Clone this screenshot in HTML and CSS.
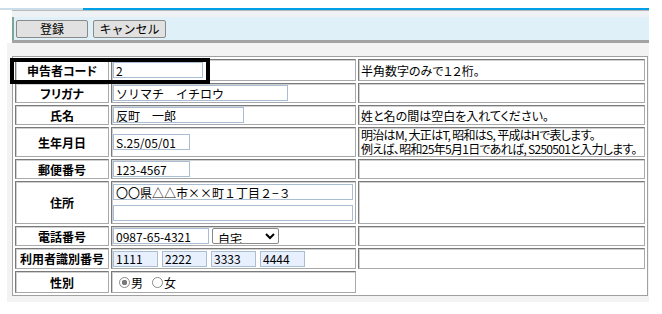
FILE: index.html
```html
<!DOCTYPE html>
<html lang="ja">
<head>
    <meta charset="UTF-8">
    <meta name="viewport" content="width=device-width, initial-scale=1.0">
    <title>申告者登録</title>
    <link rel="stylesheet" href="styles.css">
</head>
<body>
    <div class="header">
        <div class="accent-line"></div>
        <div class="toolbar">
            <div class="toolbar-band"></div>
            <div class="toolbar-body">
                <button type="button" class="tool-button btn-save">登録</button>
                <button type="button" class="tool-button btn-cancel">キャンセル</button>
            </div>
        </div>
    </div>

    <div class="panel">
        <div class="form-wrap">
            <table class="entry-table">
                <tr class="row-code">
                    <th>申告者コード</th>
                    <td class="field"><input type="text" class="text-input w-code" value="2"></td>
                    <td class="note">半角数字のみで１２桁。</td>
                </tr>
                <tr>
                    <th>フリガナ</th>
                    <td class="field"><input type="text" class="text-input w-kana" value="ソリマチ　イチロウ"></td>
                    <td class="note"></td>
                </tr>
                <tr>
                    <th>氏名</th>
                    <td class="field"><input type="text" class="text-input w-name" value="反町　一郎"></td>
                    <td class="note">姓と名の間は空白を入れてください。</td>
                </tr>
                <tr class="row-birth">
                    <th>生年月日</th>
                    <td class="field"><input type="text" class="text-input w-short" value="S.25/05/01"></td>
                    <td class="note note-tight">明治はM, 大正はT, 昭和はS, 平成はHで表します。<br>例えば、昭和25年5月1日であれば, S250501と入力します。</td>
                </tr>
                <tr>
                    <th>郵便番号</th>
                    <td class="field"><input type="text" class="text-input w-short" value="123-4567"></td>
                    <td class="note"></td>
                </tr>
                <tr class="row-address">
                    <th>住所</th>
                    <td class="field">
                        <input type="text" class="text-input w-address" value="〇〇県△△市××町１丁目２−３">
                        <input type="text" class="text-input w-address" value="">
                    </td>
                    <td class="note"></td>
                </tr>
                <tr>
                    <th>電話番号</th>
                    <td class="field">
                        <input type="text" class="text-input w-phone" value="0987-65-4321">
                        <select class="select-input">
                            <option selected>自宅</option>
                            <option>携帯</option>
                            <option>勤務先</option>
                        </select>
                    </td>
                    <td class="note"></td>
                </tr>
                <tr class="row-id">
                    <th>利用者識別番号</th>
                    <td class="field">
                        <input type="text" class="text-input id-input" value="1111">
                        <input type="text" class="text-input id-input" value="2222">
                        <input type="text" class="text-input id-input" value="3333">
                        <input type="text" class="text-input id-input" value="4444">
                    </td>
                    <td class="note"></td>
                </tr>
                <tr class="row-gender">
                    <th>性別</th>
                    <td class="field">
                        <label class="radio-label"><input type="radio" name="gender" class="radio" checked>男</label>
                        <label class="radio-label"><input type="radio" name="gender" class="radio">女</label>
                    </td>
                </tr>
            </table>
            <!-- 注目枠 -->
            <div class="highlight-box"></div>
        </div>
    </div>
</body>
</html>
```

FILE: styles.css
```css
:root {
    --accent-blue: #00a0e9;
    --toolbar-blue: #dff0f8;
    --panel-gray: #f3f3f3;
    --input-border: #a9bdd5;
    --id-background: #e8f0fe;
}

body {
    font-family: 'Noto Sans CJK JP', 'Noto Sans', sans-serif;
    font-feature-settings: "palt";
    font-size: 12px;
    color: #000;
    background-color: #fff;
    margin: 0;
    padding: 8px 0 0 0;
}

/* ヘッダー */
.accent-line {
    width: 649px;
    height: 2px;
    background: linear-gradient(to right, #cbdde8 83px, var(--accent-blue) 83px);
}

.toolbar {
    width: 637px;
    margin-left: 12px;
    border-top: 1px solid #b9b9b9;
    border-bottom: 3px solid #a3a3a3;
}

.toolbar-band {
    height: 6px;
    background-color: #eef2f4;
}

.toolbar-body {
    display: flex;
    gap: 5px;
    height: 23px;
    box-sizing: border-box;
    padding: 3px 0 0 2px;
    background-color: var(--toolbar-blue);
    border-left: 2px solid #7ea792;
}

.tool-button {
    height: 18px;
    padding: 0;
    font-family: inherit;
    font-size: 12px;
    line-height: 16px;
    color: #000;
    background-color: #e1e1e1;
    border: 1px solid #8a8a8a;
    border-radius: 2px;
    cursor: pointer;
}

.btn-save {
    width: 72px;
}

.btn-cancel {
    width: 73px;
}

/* 入力パネル */
.panel {
    width: 642px;
    margin-left: 7px;
    padding: 13px 0 6px 5px;
    box-sizing: border-box;
    background-color: var(--panel-gray);
}

.form-wrap {
    position: relative;
    width: 636px;
}

.entry-table {
    width: 636px;
    background-color: #fff;
    border: 1px solid #a0a0a0;
    border-spacing: 2px;
    table-layout: fixed;
}

.entry-table th,
.entry-table td {
    border: 1px solid #7f7f7f;
    border-color: #7a7a7a #a9a9a9 #a9a9a9 #7a7a7a;
    box-shadow: inset 1px 1px 0 #d0d0d0;
    height: 20px;
    box-sizing: border-box;
    padding: 0;
}

.entry-table th {
    width: 94px;
    font-weight: bold;
    text-align: center;
}

.entry-table td.field {
    width: 245px;
    padding: 1px 1px;
    white-space: nowrap;
    font-size: 0;
}

.entry-table td.note {
    padding: 0 2px;
    line-height: 13px;
    white-space: nowrap;
}

.entry-table td.note-tight {
    letter-spacing: -0.7px;
    line-height: 14px;
}

.row-code th,
.row-code td {
    height: 22px;
}

.row-birth th,
.row-birth td {
    height: 30px;
}

.row-address td.field {
    height: 43px;
    padding: 2px 1px;
}

.row-id th,
.row-id td {
    height: 21px;
}

.row-gender th,
.row-gender td {
    height: 22px;
}

.text-input {
    height: 16px;
    box-sizing: border-box;
    padding: 0 2px;
    font-family: inherit;
    font-size: 12px;
    line-height: 14px;
    color: #000;
    background-color: #fff;
    border: 1px solid var(--input-border);
    vertical-align: middle;
}

.w-code { width: 90px; }
.w-kana { width: 175px; }
.w-name { width: 131px; }
.w-short { width: 77px; }
.w-phone { width: 96px; }

.w-address {
    display: block;
    width: 240px;
}

.w-address + .w-address {
    margin-top: 5px;
}

.select-input {
    width: 67px;
    height: 16px;
    margin-left: 3px;
    padding: 0 1px;
    font-family: inherit;
    font-size: 12px;
    color: #000;
    background-color: #fff;
    border: 1px solid #8a8a8a;
    border-radius: 2px;
    vertical-align: middle;
}

.id-input {
    width: 45px;
    margin-right: 4px;
    background-color: var(--id-background);
}

.radio-label {
    display: inline-flex;
    align-items: center;
    font-size: 12px;
    margin-right: 3px;
}

.radio {
    appearance: none;
    width: 11px;
    height: 11px;
    margin: 0 1px 0 6px;
    border: 1px solid #8a8a8a;
    border-radius: 50%;
    background-color: #fff;
}

.radio:checked {
    background: radial-gradient(circle, #7a7a7a 0 2.5px, #fff 3px);
}

.highlight-box {
    position: absolute;
    left: -2px;
    top: 2px;
    width: 200px;
    height: 26px;
    box-sizing: border-box;
    border: 4px solid #000;
    pointer-events: none;
}
```
